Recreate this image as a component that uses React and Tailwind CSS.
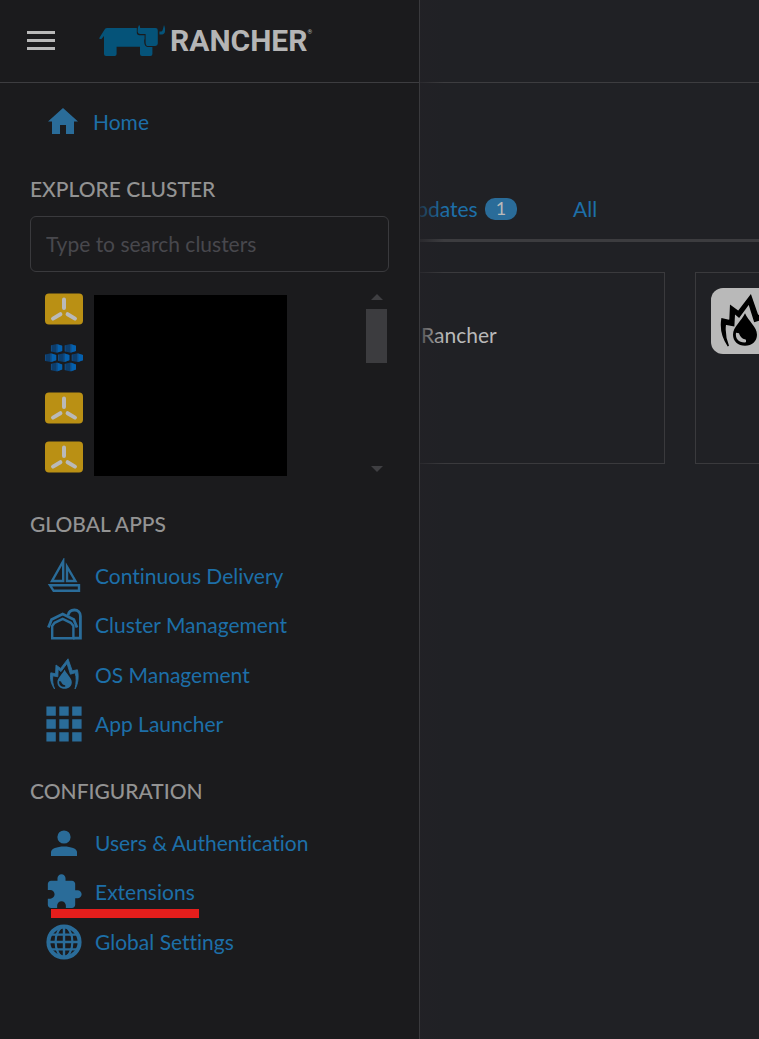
const FlameShape = () => (
  <>
    <path d="M8.6 32 C5.2 27 3.8 22 4.8 15.8 L9.6 16.8 L10 8 L14.6 11.4 L22 1.8 L26.2 13.8 L31.4 12.8 C33 20 32 27 29 32 C30.4 26 30.6 20.6 29.2 15.8 L24.4 17.2 L21 6.4 L15 14.6 L12.2 12.2 L11.8 19.8 L6.8 18.8 C6.2 23 6.8 27.6 8.6 32 Z" stroke="currentColor" strokeWidth="0.9" />
    <path fillRule="evenodd" d="M18.6 12.4 C20.5 17 25.8 20.6 25.8 25.2 C25.8 29 22.8 31.8 18.6 31.8 C14.4 31.8 11.4 29 11.4 25.2 C11.4 20.6 16.6 17 18.6 12.4 Z M13.2 24 C12.6 27.8 15.2 30.2 19.2 29.8 L19.2 28.2 C17.4 28 15.6 26.6 15 24.4 Z" />
  </>
);

const icons = {
  home: <path d="M17 4 L32 17.6 H28 V30 H20 V21 H14 V30 H6 V17.6 H2 Z" />,
  boat: (
    <g fill="none" stroke="currentColor" strokeWidth="2.4">
      <path d="M17.2 3.2 V23 H6 Z" />
      <path d="M21 8.6 V23 H29.4 Z" />
      <path d="M4 27.3 H33 V32.8 H7.6 Z" />
    </g>
  ),
  barn: (
    <g fill="none" stroke="currentColor">
      <path strokeWidth="2.8" d="M2.4 20.6 L5.6 12.6 L16.7 7 L27.8 12.6 L31 20.6" />
      <path strokeWidth="2.4" d="M6.2 31.2 V19 L8.6 15.8 L16.7 11.8 L24.8 15.8 L27.4 19 V31.2 Z" />
      <path strokeWidth="2.8" d="M22 8.4 C22.6 5 25 3 28.4 3 C32 3 34.4 5.6 34.4 9 V31.2 H27" />
    </g>
  ),
  flame: <FlameShape />,
  grid: (
    <path d="M.4.4h9.4v9.4H.4z M13.3.4h9.4v9.4h-9.4z M26.2.4h9.4v9.4h-9.4z M.4 13.3h9.4v9.4H.4z M13.3 13.3h9.4v9.4h-9.4z M26.2 13.3h9.4v9.4h-9.4z M.4 26.2h9.4v9.4H.4z M13.3 26.2h9.4v9.4h-9.4z M26.2 26.2h9.4v9.4h-9.4z" />
  ),
  user: (
    <>
      <circle cx="18" cy="12" r="6.6" />
      <path d="M5 31 V27 C5 23.6 11 21.4 18 21.4 C25 21.4 31 23.6 31 27 V31 Z" />
    </>
  ),
  puzzle: (
    <path
      transform="translate(-1.4 -1.4) scale(1.61)"
      d="M20.5 11H19V7c0-1.1-.9-2-2-2h-4V3.5C13 2.12 11.88 1 10.5 1S8 2.12 8 3.5V5H4c-1.1 0-1.99.9-1.99 2v3.8H3.5c1.49 0 2.7 1.21 2.7 2.7s-1.21 2.7-2.7 2.7H2V20c0 1.1.9 2 2 2h3.8v-1.5c0-1.49 1.21-2.7 2.7-2.7 1.49 0 2.7 1.21 2.7 2.7V22H17c1.1 0 2-.9 2-2v-4h1.5c1.38 0 2.5-1.12 2.5-2.5S21.88 11 20.5 11z"
    />
  ),
  globe: (
    <g fill="none" stroke="currentColor">
      <circle cx="18" cy="18" r="15.6" strokeWidth="4" />
      <ellipse cx="18" cy="18" rx="8.4" ry="15" strokeWidth="2.2" />
      <path strokeWidth="2.4" d="M18 2 V34 M3 18 H33 M5 10.6 H31 M5 25.4 H31" />
    </g>
  ),
};

function NavLink({ icon, gap = "gap-[13px]", children }) {
  return (
    <a href="#" className={`flex items-center ${gap} pl-4 text-[21px] leading-[30px] text-[#1d6fa8]`}>
      <svg viewBox="0 0 36 36" fill="currentColor" className="size-9 shrink-0 text-[#2a6c99]" aria-hidden="true">
        {icons[icon]}
      </svg>
      {children}
    </a>
  );
}

function Heading({ children }) {
  return <h2 className="text-[21px] leading-[30px] font-medium text-[#939393] uppercase">{children}</h2>;
}

function K3sIcon() {
  return (
    <svg viewBox="0 0 38 32" className="w-[38px] h-8" aria-hidden="true">
      <rect y="0.5" width="38" height="31" rx="4" fill="#ba9014" />
      <path d="M19 6.4 V15 M15.4 21.2 L8 25.6 M22.6 21.2 L30 25.6" stroke="#b9b9b9" strokeWidth="4" strokeLinecap="round" />
    </svg>
  );
}

const barrels = [[6, 0], [19.8, 0], [0, 9.3], [13.2, 9.3], [26.8, 9.3], [6, 18.6], [19.8, 18.6]];

function AzureIcon() {
  return (
    <svg viewBox="0 0 38 28" className="w-[38px] h-7" aria-hidden="true">
      {barrels.map(([x, y]) => (
        <g key={`${x}-${y}`} transform={`translate(${x} ${y})`}>
          <path d="M0 1.2 L6 0 L11.2 1.8 V7 L6 8.8 L0 7.6 Z" fill="#0d3d6b" />
          <path d="M6.4 0.2 L11.2 1.8 V7 L6.4 8.6 Z" fill="#0560ad" />
          <path d="M0.4 1.4 V7.4 M5.8 0.4 V8.4" stroke="#17508a" strokeWidth="0.8" />
        </g>
      ))}
    </svg>
  );
}

function Logo() {
  return (
    <a href="#" className="flex items-center gap-[5px]" aria-label="Rancher">
      <svg viewBox="0 0 66 31" fill="#055379" className="w-[66px] h-[31px]" aria-hidden="true">
        <path d="M0 13.4 L5.6 4.4 Q6.4 3 8.4 3 H37.8 V7.6 Q37.8 10.2 40.4 10.2 H45.6 V14 Q45 14.6 45.2 17 Q45.4 21.4 48.6 22 H53.4 V29 Q53.4 31 51.4 31 H43 Q41 31 41 29 V21.8 H17.6 V29 Q17.6 31 15.6 31 H7 Q5 31 5 29 V11 L2.2 14.2 Z" />
        <path d="M40 0 Q41 0 41.2 3 H56.6 Q58.8 3 58.8 5.4 V18.6 Q58.8 21 56.4 21 H49.4 Q46.6 21 46.6 17.4 V9 H41 Q38.6 9 38.6 6.6 Q38.6 2 40 0 Z" />
        <path d="M65 0 Q66.4 3 66 6.6 Q65.6 9.4 63 9.4 H60.4 V6.4 H62.4 Q63.6 6.4 63.8 4.6 Z" />
      </svg>
      <span className="flex items-start text-[#b5b5b5]">
        <span className="font-['Roboto',sans-serif] text-[30px] leading-[34px] font-bold">RANCHER</span>
        <span className="font-['Roboto',sans-serif] text-[6px] leading-4">®</span>
      </span>
    </a>
  );
}

function Drawer() {
  return (
    <aside className="absolute inset-y-0 left-0 w-[420px] border-r border-[#3a3a3d] bg-[#1b1b1d]">
      <div className="pointer-events-none absolute inset-y-0 left-full ml-px w-6 bg-linear-to-r from-[#222126]/70 to-[#202125]/0" />
      <header className="flex h-[83px] items-center gap-11 border-b border-[#3d3d40] pb-px pl-[27px]">
        <button type="button" aria-label="Menu" className="flex w-7 flex-col gap-[5px]">
          <span className="h-[3px] w-full bg-[#b9b9b9]" />
          <span className="h-[3px] w-full bg-[#b9b9b9]" />
          <span className="h-[3px] w-full bg-[#b9b9b9]" />
        </button>
        <Logo />
      </header>

      <nav className="px-[30px] pt-[15px]">
        <div className="grid h-12">
          <NavLink icon="home" gap="gap-[11px]">Home</NavLink>
        </div>

        <section className="mt-7">
          <Heading>Explore Cluster</Heading>
          <input
            type="text"
            aria-label="Search clusters"
            placeholder="Type to search clusters"
            className="mt-3 h-14 w-full rounded-md border border-[#3a3a3d] bg-transparent px-[15px] pb-0.5 text-[21px] text-[#b5b5b5] placeholder:text-[#48484d]"
          />
          <div className="mt-3 flex h-[198px] items-stretch pr-0.5 pl-[15px]">
            <ul className="grid flex-none grid-rows-4 items-center">
              <li><K3sIcon /></li>
              <li><AzureIcon /></li>
              <li><K3sIcon /></li>
              <li><K3sIcon /></li>
            </ul>
            <div className="mt-[11px] mb-1.5 ml-[11px] w-[193px] bg-black" />
            <div className="my-[10px] ml-auto flex w-[21px] flex-col items-center">
              <svg viewBox="0 0 12 6" className="h-1.5 w-3" fill="#3f3f42" aria-hidden="true"><path d="M6 0 L12 6 H0 Z" /></svg>
              <div className="mt-[9px] h-[54px] w-full bg-[#3c3c3f]" />
              <svg viewBox="0 0 12 6" className="mt-auto h-1.5 w-3" fill="#3f3f42" aria-hidden="true"><path d="M0 0 H12 L6 6 Z" /></svg>
            </div>
          </div>
        </section>

        <section className="mt-[27px]">
          <Heading>Global Apps</Heading>
          <div className="mt-3 grid h-[198px] grid-rows-4">
            <NavLink icon="boat">Continuous Delivery</NavLink>
            <NavLink icon="barn">Cluster Management</NavLink>
            <NavLink icon="flame">OS Management</NavLink>
            <NavLink icon="grid">App Launcher</NavLink>
          </div>
        </section>

        <section className="mt-[27px]">
          <Heading>Configuration</Heading>
          <div className="mt-3 grid h-[149px] grid-rows-3">
            <NavLink icon="user">Users &amp; Authentication</NavLink>
            <div className="relative grid">
              <NavLink icon="puzzle">Extensions</NavLink>
              <div className="absolute -bottom-px left-[21px] h-[9px] w-[148px] bg-[#e41e1c]" />
            </div>
            <NavLink icon="globe">Global Settings</NavLink>
          </div>
        </section>
      </nav>
    </aside>
  );
}

function Content() {
  return (
    <div className="overflow-hidden">
      <header className="h-[83px] border-b border-[#3d3d40]" />
      <main className="pt-[111px] pl-[30px]">
        <div className="flex h-12 items-start gap-14 border-b-[3px] border-[#3c3c3f] pl-[371px] text-[21px] leading-[30px] text-[#1d6fa8]">
          <a href="#" className="flex items-center gap-[7px]">
            Updates
            <span className="rounded-[10px] bg-[#2a6c99] px-[11px] pb-0.5 text-[18px] leading-5 text-[#b9b9b9]">1</span>
          </a>
          <a href="#">All</a>
        </div>
        <div className="mt-[30px] flex gap-[30px]">
          <article className="h-48 w-[635px] flex-none border border-[#3a3a3d] pt-[47px] pl-[390px] text-[21px] leading-[30px] text-[#b9b9b9]">
            Rancher
          </article>
          <article className="h-48 w-[635px] flex-none border border-[#3a3a3d] p-[15px]">
            <div className="flex size-[66px] items-center justify-center rounded-xl bg-[#b9b9b9]">
              <svg viewBox="0 0 36 34" fill="currentColor" className="size-[60px] text-black" aria-hidden="true">
                <FlameShape />
              </svg>
            </div>
          </article>
        </div>
      </main>
    </div>
  );
}

export default function App() {
  return (
    <div className="relative min-h-screen overflow-hidden bg-[#202125] font-['Lato',sans-serif] [font-variant-ligatures:none]">
      <Content />
      <Drawer />
    </div>
  );
}
